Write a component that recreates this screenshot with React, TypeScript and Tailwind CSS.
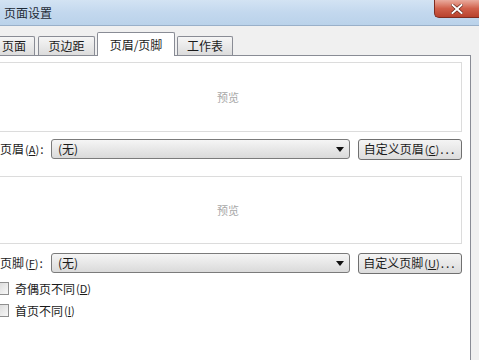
export default function App() {
  return (
    <div className="w-[479px] h-[360px] overflow-hidden bg-[#f0f0f0] text-[12px] leading-none text-[#1b1b1b] font-['Noto_Sans_CJK_SC','Noto_Sans',sans-serif] flex flex-col">
      {/* Title bar */}
      <div className="h-[26px] shrink-0 flex justify-between bg-linear-to-b from-[#d3e3f3] via-[#c3d8ee] to-[#bad2ea] border-b border-[#99b0c9]">
        <span className="pl-[4px] pt-[7px] text-[#1e2a36]">页面设置</span>
        <div className="w-[45px] h-[18px] rounded-bl-[5px] border-l border-b border-[#7e2c20] bg-linear-to-b from-[#e9ab9e] via-[#d0604b] to-[#b8412c] flex items-center justify-center">
          <svg width="12" height="10" viewBox="0 0 12 10">
            <path d="M1.5 1 L10.5 9 M10.5 1 L1.5 9" stroke="#5a1a10" strokeWidth="3.2" strokeLinecap="square" />
            <path d="M1.5 1 L10.5 9 M10.5 1 L1.5 9" stroke="#ffffff" strokeWidth="2" strokeLinecap="square" />
          </svg>
        </div>
      </div>

      {/* Tabs */}
      <div className="mt-[6px] h-[23px] shrink-0 flex items-end -ml-[7px]">
        <Tab label="页面" width="w-[42px]" />
        <div className="w-[3px]" />
        <Tab label="页边距" width="w-[57px]" />
        <div className="w-[2px]" />
        <div className="w-[78px] h-[24px] -mb-px relative z-10 bg-white border border-b-0 border-[#898c95] rounded-t-[2px] flex items-center justify-center">
          页眉/页脚
        </div>
        <div className="w-[2px]" />
        <Tab label="工作表" width="w-[56px]" />
      </div>

      {/* Panel */}
      <div className="w-[471px] flex-1 bg-white border-t border-r border-[#898c95] pt-[6px] pr-[8px] flex flex-col">
        <Preview height="h-[70px]" />
        <FieldRow className="mt-[7px]" label="页眉" hotkey="A" button="自定义页眉" buttonKey="C" />
        <div className="mt-[17px]">
          <Preview height="h-[68px]" />
        </div>
        <FieldRow className="mt-[9px]" label="页脚" hotkey="F" button="自定义页脚" buttonKey="U" />
        <CheckRow className="mt-[9px]" label="奇偶页不同" hotkey="D" />
        <CheckRow className="mt-[9px]" label="首页不同" hotkey="I" />
      </div>
    </div>
  );
}

/* ── Helpers ──────────────────────────────────────────────────── */

function Tab({ label, width }: { label: string; width: string }) {
  return (
    <div
      className={`${width} h-[19px] bg-linear-to-b from-[#f6f6f6] to-[#dcdcdc] border border-b-0 border-[#898c95] rounded-t-[2px] flex items-center justify-center`}
    >
      {label}
    </div>
  );
}

function Preview({ height }: { height: string }) {
  return (
    <div
      className={`${height} -ml-[6px] border border-[#dcdcdc] flex items-center justify-center text-[11px] text-[#a8a8a8]`}
    >
      预览
    </div>
  );
}

function Key({ k }: { k: string }) {
  return (
    <span className="text-[11px] ml-[1px]">
      (<span className="underline">{k}</span>)
    </span>
  );
}

function FieldRow({
  className,
  label,
  hotkey,
  button,
  buttonKey,
}: {
  className: string;
  label: string;
  hotkey: string;
  button: string;
  buttonKey: string;
}) {
  return (
    <div className={`${className} h-[20px] flex items-center`}>
      <div className="w-[51px] shrink-0 flex items-center">
        {label}
        <Key k={hotkey} />
        <span className="ml-[1px]">:</span>
      </div>
      <div className="flex-1 h-[20px] border border-[#7b7b7b] rounded-[3px] bg-linear-to-b from-[#f5f5f5] to-[#dadada] flex items-center justify-between pl-[6px] pr-[5px]">
        <span>(无)</span>
        <svg width="8" height="5" viewBox="0 0 8 5">
          <path d="M0 0 H8 L4 5 Z" fill="#111" />
        </svg>
      </div>
      <div className="ml-[8px] w-[104px] h-[21px] border border-[#707070] rounded-[3px] bg-linear-to-b from-[#f4f4f4] to-[#dcdcdc] flex items-center justify-center">
        {button}
        <Key k={buttonKey} />
        <span className="tracking-[2px] ml-[1px]">...</span>
      </div>
    </div>
  );
}

function CheckRow({
  className,
  label,
  hotkey,
}: {
  className: string;
  label: string;
  hotkey: string;
}) {
  return (
    <div className={`${className} h-[13px] flex items-center`}>
      <div className="-ml-[4px] w-[13px] h-[13px] shrink-0 border border-[#8f8f8f] bg-linear-to-br from-[#d8d8d8] to-[#f8f8f8]" />
      <span className="ml-[6px]">{label}</span>
      <Key k={hotkey} />
    </div>
  );
}
